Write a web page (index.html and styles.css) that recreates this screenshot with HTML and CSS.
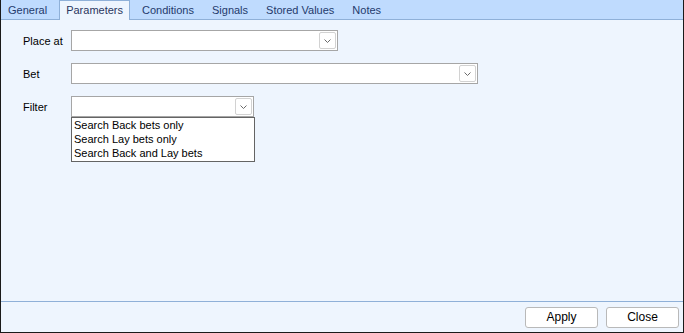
FILE: index.html
```html
<!DOCTYPE html>
<html lang="en">
<head>
  <meta charset="UTF-8" />
  <meta name="viewport" content="width=device-width, initial-scale=1.0" />
  <title>Rule</title>
  <link rel="stylesheet" href="styles.css">
</head>
<body>
  <div class="window">
    <nav class="tabs">
      <span class="tab first">General</span>
      <span class="tab active">Parameters</span>
      <span class="tab">Conditions</span>
      <span class="tab">Signals</span>
      <span class="tab">Stored Values</span>
      <span class="tab">Notes</span>
    </nav>

    <main class="content">
      <div class="row">
        <label>Place at</label>
        <div class="combo combo-place">
          <span class="drop">
            <svg width="7" height="4" viewBox="0 0 7 4"><polyline points="0.5,0.5 3.5,3.5 6.5,0.5" fill="none" stroke="#6a6a6a" stroke-width="1" /></svg>
          </span>
        </div>
      </div>

      <div class="row">
        <label>Bet</label>
        <div class="combo combo-bet">
          <span class="drop">
            <svg width="7" height="4" viewBox="0 0 7 4"><polyline points="0.5,0.5 3.5,3.5 6.5,0.5" fill="none" stroke="#6a6a6a" stroke-width="1" /></svg>
          </span>
        </div>
      </div>

      <div class="row">
        <label>Filter</label>
        <div class="combo combo-filter">
          <span class="drop">
            <svg width="7" height="4" viewBox="0 0 7 4"><polyline points="0.5,0.5 3.5,3.5 6.5,0.5" fill="none" stroke="#6a6a6a" stroke-width="1" /></svg>
          </span>
          <ul class="list">
            <li>Search Back bets only</li>
            <li>Search Lay bets only</li>
            <li>Search Back and Lay bets</li>
          </ul>
        </div>
      </div>
    </main>

    <footer class="footer">
      <button>Apply</button>
      <button>Close</button>
    </footer>
  </div>
</body>
</html>
```

FILE: styles.css
```css
body {
  margin: 0;
  padding: 0;
  font-family: "Liberation Sans", Arial, sans-serif;
  font-size: 11px;
}

.window {
  width: 684px;
  height: 333px;
  box-sizing: border-box;
  border: 1px solid #1a1a1a;
  border-top: none;
  background-color: #eef5fe;
  display: flex;
  flex-direction: column;
}

.tabs {
  display: flex;
  align-items: flex-end;
  height: 19px;
  background-color: #bfdbfe;
  border-bottom: 1px solid #8fb0d8;
}

.tab {
  padding: 0 9px;
  height: 17px;
  line-height: 17px;
  color: #243a6c;
}

.tab.first {
  padding-left: 7px;
}

.tab.active {
  box-sizing: border-box;
  height: 20px;
  line-height: 19px;
  margin: 0 3px -1px 3px;
  padding: 0 6px;
  background-color: #eef5fe;
  border: 1px solid #8fb0d8;
  border-bottom: none;
  color: #2a3560;
}

.content {
  flex: 1;
  padding: 10px 0 0 22px;
  display: flex;
  flex-direction: column;
  gap: 12px;
}

.row {
  display: flex;
  align-items: center;
  height: 21px;
}

label {
  width: 48px;
  color: #000;
}

.combo {
  position: relative;
  height: 21px;
  box-sizing: border-box;
  border: 1px solid #a6a6a6;
  background-color: #fff;
}

.combo-place {
  width: 267px;
}

.combo-bet {
  width: 407px;
}

.combo-filter {
  width: 183px;
}

.drop {
  position: absolute;
  top: 1px;
  right: 1px;
  width: 17px;
  height: 17px;
  box-sizing: border-box;
  border: 1px solid #d2d2d2;
  border-radius: 2px;
  background-color: #fff;
  display: flex;
  align-items: center;
  justify-content: center;
}

.list {
  position: absolute;
  top: 20px;
  left: -1px;
  width: 184px;
  margin: 0;
  padding: 0 0 1px 2px;
  box-sizing: border-box;
  list-style: none;
  background-color: #fff;
  border: 1px solid #646464;
}

.list li {
  height: 14px;
  line-height: 14px;
  color: #000;
}

.footer {
  height: 31px;
  box-sizing: border-box;
  border-top: 1px solid #8fb0d8;
  display: flex;
  justify-content: flex-end;
  align-items: center;
  gap: 8px;
  padding: 0 4px 0 0;
}

button {
  width: 73px;
  height: 21px;
  font-family: "Liberation Sans", Arial, sans-serif;
  font-size: 12px;
  color: #000;
  background-color: #fff;
  border: 1px solid #b9b9b9;
  border-radius: 3px;
  padding: 0;
}
```
